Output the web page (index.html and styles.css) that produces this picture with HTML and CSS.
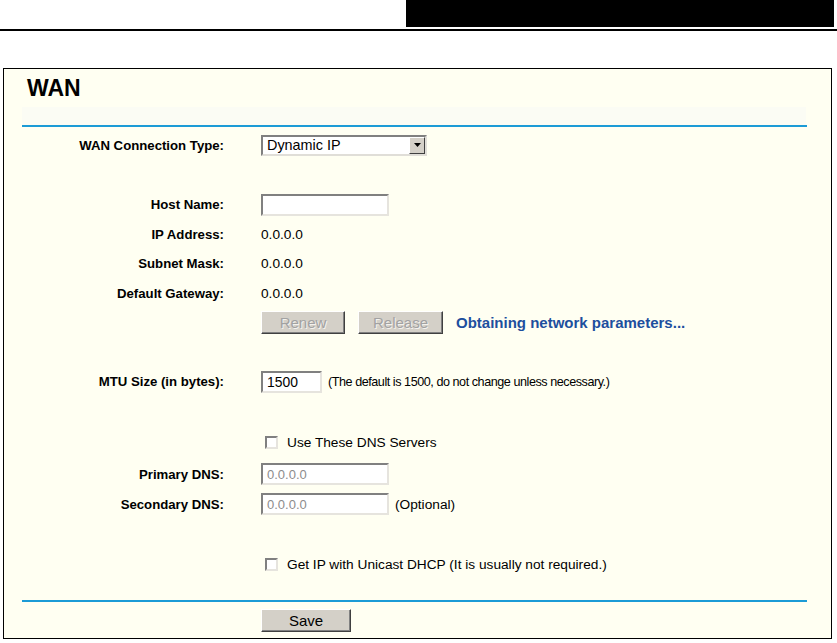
FILE: index.html
```html
<!DOCTYPE html>
<html>
<head>
<meta charset="utf-8">
<link rel="stylesheet" href="styles.css">
</head>
<body>
<div class="topbar"><div class="topblock"></div></div>
<div class="rule"></div>
<div class="panel">
  <div class="head">
    <h1 class="title">WAN</h1>
    <div class="band"></div>
  </div>
  <div class="blueline"></div>

  <div class="row r-type">
    <div class="label">WAN Connection Type:</div>
    <div class="value">
      <div class="select"><span class="select-text">Dynamic IP</span><span class="select-btn"><svg width="7" height="4" viewBox="0 0 7 4"><path d="M0 0h7L3.5 4z" fill="#000"/></svg></span></div>
    </div>
  </div>

  <div class="row r-host">
    <div class="label">Host Name:</div>
    <div class="value"><div class="input w128"></div></div>
  </div>
  <div class="row">
    <div class="label">IP Address:</div>
    <div class="value">0.0.0.0</div>
  </div>
  <div class="row">
    <div class="label">Subnet Mask:</div>
    <div class="value">0.0.0.0</div>
  </div>
  <div class="row">
    <div class="label">Default Gateway:</div>
    <div class="value">0.0.0.0</div>
  </div>
  <div class="row r-btns">
    <div class="label"></div>
    <div class="value">
      <span class="btn disabled w84">Renew</span>
      <span class="btn disabled w85 ml13">Release</span>
      <span class="status">Obtaining network parameters...</span>
    </div>
  </div>

  <div class="row r-mtu">
    <div class="label">MTU Size (in bytes):</div>
    <div class="value"><div class="input w61"><span class="itext">1500</span></div><span class="note small">(The default is 1500, do not change unless necessary.)</span></div>
  </div>

  <div class="row r-chk1">
    <div class="label"></div>
    <div class="value"><span class="check"></span><span class="chklabel">Use These DNS Servers</span></div>
  </div>
  <div class="row r-dns r-pdns">
    <div class="label">Primary DNS:</div>
    <div class="value"><div class="input w128"><span class="itext grey">0.0.0.0</span></div></div>
  </div>
  <div class="row r-dns">
    <div class="label">Secondary DNS:</div>
    <div class="value"><div class="input w128"><span class="itext grey">0.0.0.0</span></div><span class="note">(Optional)</span></div>
  </div>

  <div class="row r-chk2">
    <div class="label"></div>
    <div class="value"><span class="check"></span><span class="chklabel">Get IP with Unicast DHCP (It is usually not required.)</span></div>
  </div>

  <div class="blueline bottom"></div>
  <div class="saverow">
    <span class="btn w90">Save</span>
  </div>
</div>
</body>
</html>
```

FILE: styles.css
```css
html, body {
  margin: 0;
  padding: 0;
  background: #ffffff;
  font-family: Arial, "Liberation Sans", Helvetica, sans-serif;
  font-size: 13.7px;
  color: #000;
}
.topbar {
  height: 27px;
  display: flex;
  justify-content: flex-end;
}
.topblock {
  width: 428px;
  height: 27px;
  margin-right: 3px;
  background: #000;
}
.rule {
  margin-top: 2px;
  height: 2px;
  background: #000;
}
.panel {
  margin: 37px 0 0 3px;
  width: 829px;
  height: 571px;
  border: 1px solid #000;
  background: #fffff2;
  box-sizing: border-box;
}
.head {
  height: 56px;
  display: flex;
  flex-direction: column;
}
.title {
  margin: 0;
  padding: 5px 0 0 23px;
  height: 32px;
  font-size: 23px;
  font-weight: bold;
  line-height: 28px;
}
.band {
  margin: 1px 25px 0 18px;
  flex: 1;
  background: #fbfcf4;
}
.blueline {
  height: 2px;
  margin: 0 24px 0 18px;
  background: #1c9bd6;
}
.blueline.bottom {
  margin-top: 20px;
}
.row {
  display: flex;
  align-items: center;
  height: 29.5px;
}
.label {
  width: 220px;
  text-align: right;
  font-weight: bold;
  font-size: 13.2px;
  flex: none;
}
.value {
  margin-left: 37px;
  display: flex;
  align-items: center;
}
.r-type { margin-top: 5px; height: 26px; }
.r-host { margin-top: 32px; }
.r-btns { height: 28px; }
.r-mtu { margin-top: 31px; }
.r-chk1 { margin-top: 31px; }
.r-dns { height: 30px; }
.r-pdns { margin-top: 2px; }
.r-chk2 { margin-top: 31px; }

.select {
  width: 166px;
  height: 21px;
  box-sizing: border-box;
  border: 2px solid;
  border-color: #808080 #e0ded8 #e0ded8 #808080;
  background: #fff;
  display: flex;
  align-items: center;
}
.select-text {
  flex: 1;
  padding-left: 4px;
  font-size: 14.4px;
}
.select-btn {
  width: 16px;
  height: 17px;
  background: #d4d0c8;
  box-sizing: border-box;
  border: 1px solid;
  border-color: #fff #404040 #404040 #fff;
  display: flex;
  align-items: center;
  justify-content: center;
}
.input {
  height: 22px;
  box-sizing: border-box;
  border: 2px solid;
  border-color: #808080 #e6e4de #e6e4de #808080;
  background: #fff;
  display: flex;
  align-items: center;
}
.w128 { width: 128px; }
.w61 { width: 61px; }
.itext {
  padding-left: 4px;
  font-size: 13.9px;
}
.itext.grey { color: #8c8c8c; font-size: 13px; }
.note { margin-left: 6px; }
.note.small { font-size: 12.6px; letter-spacing: -0.45px; }
.btn {
  display: inline-flex;
  align-items: center;
  justify-content: center;
  height: 23px;
  box-sizing: border-box;
  background: #d4d0c8;
  border: 1px solid;
  border-color: #ffffff #404040 #404040 #ffffff;
  box-shadow: inset -1px -1px 0 #808080;
  font-size: 15px;
}
.btn.disabled {
  color: #a2a2a2;
  text-shadow: 1px 1px 0 #f4f2ee;
}
.w84 { width: 84px; }
.w85 { width: 85px; }
.w90 { width: 90px; }
.ml13 { margin-left: 13px; }
.status {
  margin-left: 13px;
  font-weight: bold;
  font-size: 15px;
  color: #1d4f9e;
}
.check {
  width: 13px;
  height: 13px;
  margin-left: 4px;
  box-sizing: border-box;
  border: 2px solid;
  border-color: #808080 #e6e4de #e6e4de #808080;
  background: #fff;
}
.chklabel { margin-left: 9px; }
.saverow {
  padding: 7px 0 0 257px;
}
```
